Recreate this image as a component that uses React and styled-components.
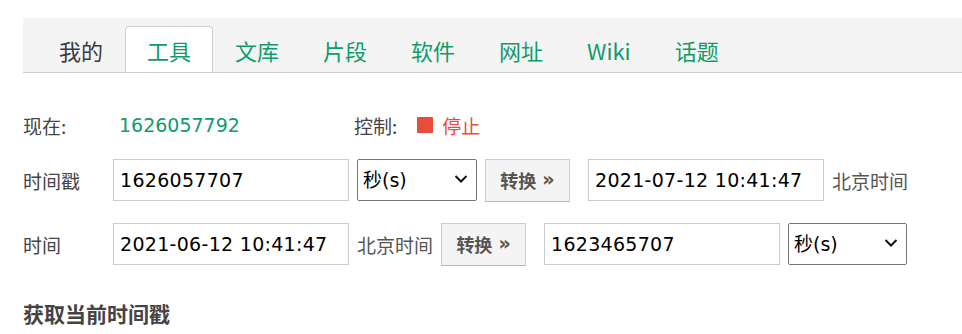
import React, {useState} from "react";
import styled, {createGlobalStyle} from "styled-components";

const GlobalStyle = createGlobalStyle`
  html, body {
    margin: 0;
    padding: 0;
    background: #fff;
  }
  body {
    padding-top: 18px;
    font-family: "Noto Sans CJK SC", "Noto Sans", sans-serif;
    color: #444;
  }
`;

const GREEN = "#0f9b6c";
const RED = "#e74c3c";

const Page = styled.div`
  padding-left: 23px;
`;

const TabBar = styled.div`
  display: flex;
  align-items: flex-end;
  height: 54px;
  padding-left: 14px;
  background: #f4f4f4;
  border-bottom: 1px solid #cfcfcf;
`;

const Tab = styled.div`
  height: 46px;
  box-sizing: border-box;
  padding: 0 21px;
  display: flex;
  align-items: center;
  font-size: 22px;
  line-height: 1;
  border: 1px solid ${({$active}) => ($active ? "#cfcfcf" : "transparent")};
  border-bottom: none;
  border-radius: 4px 4px 0 0;
  background: ${({$active}) => ($active ? "#fff" : "transparent")};
  color: ${({$mine}) => ($mine ? "#3b3b45" : GREEN)};
  cursor: pointer;
  white-space: nowrap;
`;

const Content = styled.div`
  padding-top: 31px;
`;

const Row = styled.div`
  display: flex;
  align-items: center;
  gap: 8px;
  height: 42px;
  margin-top: ${({$top}) => $top || 0}px;
`;

const Label = styled.div`
  width: 82px;
  font-size: 19px;
  line-height: 1;
  color: #444;
  white-space: nowrap;
`;

const Now = styled.div`
  width: 233px;
  padding-left: 6px;
  box-sizing: border-box;
  font-family: "DejaVu Sans", sans-serif;
  font-size: 19px;
  color: ${GREEN};
`;

const Control = styled.div`
  display: flex;
  align-items: center;
  font-size: 19px;
  line-height: 1;
  color: #444;
`;

const Stop = styled.div`
  display: flex;
  align-items: center;
  gap: 9px;
  margin-left: 20px;
  color: ${RED};
  cursor: pointer;
`;

const Square = styled.span`
  width: 16px;
  height: 16px;
  border-radius: 1px;
  background: ${RED};
`;

const Input = styled.input`
  width: ${({$w}) => $w || 236}px;
  height: 42px;
  box-sizing: border-box;
  padding: 0 6px;
  border: 1px solid #cccccc;
  border-radius: 0;
  outline: none;
  font-family: "DejaVu Sans", sans-serif;
  font-size: 19px;
  letter-spacing: 0.3px;
  color: #000;
  background: #fff;
`;

const SelectBox = styled.div`
  position: relative;
  width: ${({$w}) => $w || 120}px;
  height: 42px;
`;

const Select = styled.select`
  appearance: none;
  width: 100%;
  height: 100%;
  box-sizing: border-box;
  padding: 0 0 0 5px;
  border: 1px solid #767676;
  border-radius: 2px;
  background: #fff;
  font-family: "DejaVu Sans", "Noto Sans CJK SC", sans-serif;
  font-size: 19px;
  color: #000;
  outline: none;
`;

const Chevron = styled.svg`
  position: absolute;
  right: 9px;
  top: 15px;
  pointer-events: none;
`;

const Button = styled.button`
  height: 43px;
  width: 85px;
  margin-right: 10px;
  padding: 0;
  display: flex;
  align-items: center;
  justify-content: center;
  gap: 6px;
  border: 1px solid #cccccc;
  border-bottom-color: #b8b8b8;
  border-radius: 0;
  background: #f4f4f4;
  font-family: "Noto Sans CJK SC", sans-serif;
  font-size: 18px;
  font-weight: 700;
  color: #555;
  cursor: pointer;
  white-space: nowrap;
`;

const Arrows = styled.span`
  font-family: "DejaVu Sans", sans-serif;
  font-size: 19px;
  font-weight: 700;
  line-height: 1;
  margin-top: -2px;
`;

const Zone = styled.span`
  font-size: 19px;
  line-height: 1;
  color: #555;
  white-space: nowrap;
`;

const Heading = styled.h3`
  margin: 33px 0 0;
  font-size: 21px;
  line-height: 30px;
  font-weight: 700;
  color: #444;
`;

const UnitSelect = ({w}) => (
    <SelectBox $w={w}>
        <Select defaultValue="s">
            <option value="s">秒(s)</option>
            <option value="ms">毫秒(ms)</option>
        </Select>
        <Chevron width="14" height="10" viewBox="0 0 14 10">
            <path d="M1.5 2 L7 7.5 L12.5 2" fill="none" stroke="#111" strokeWidth="2"/>
        </Chevron>
    </SelectBox>
);

const ConvertButton = () => (
    <Button>
        转换<Arrows>»</Arrows>
    </Button>
);

const tabs = ["我的", "工具", "文库", "片段", "软件", "网址", "Wiki", "话题"];

const App = () => {
    const [active, setActive] = useState(1);

    return (
        <Page>
            <GlobalStyle/>
            <TabBar>
                {tabs.map((t, i) => (
                    <Tab key={t} $active={i === active} $mine={i === 0} onClick={() => setActive(i)}>
                        {t}
                    </Tab>
                ))}
            </TabBar>
            <Content>
                <Row>
                    <Label>现在:</Label>
                    <Now>1626057792</Now>
                    <Control>
                        控制:
                        <Stop>
                            <Square/>
                            停止
                        </Stop>
                    </Control>
                </Row>
                <Row $top={13}>
                    <Label>时间戳</Label>
                    <Input defaultValue="1626057707"/>
                    <UnitSelect/>
                    <ConvertButton/>
                    <Input defaultValue="2021-07-12 10:41:47"/>
                    <Zone>北京时间</Zone>
                </Row>
                <Row $top={22}>
                    <Label>时间</Label>
                    <Input defaultValue="2021-06-12 10:41:47"/>
                    <Zone>北京时间</Zone>
                    <ConvertButton/>
                    <Input defaultValue="1623465707"/>
                    <UnitSelect w={119}/>
                </Row>
                <Heading>获取当前时间戳</Heading>
            </Content>
        </Page>
    );
};

export default App;
